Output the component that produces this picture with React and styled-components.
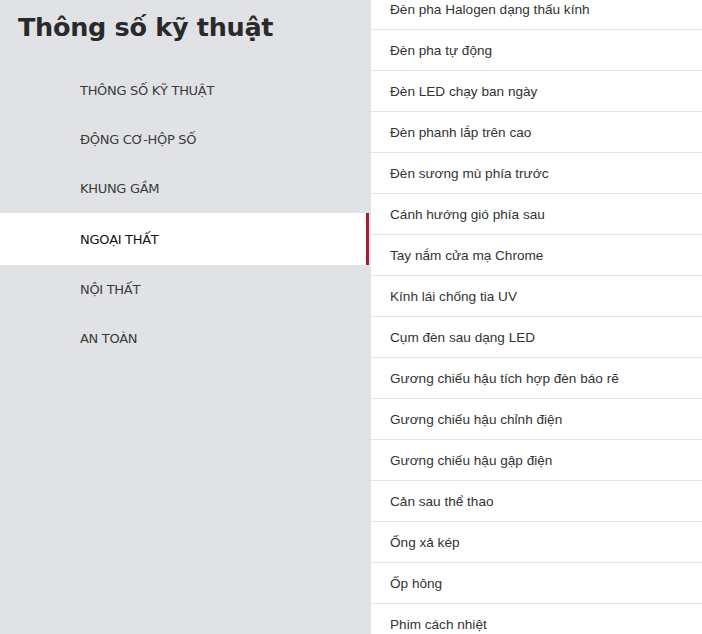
import styled, { createGlobalStyle } from 'styled-components'

const GlobalStyle = createGlobalStyle`
  html, body {
    margin: 0;
    padding: 0;
    background: #e1e2e6;
    overflow: hidden;
  }
`

const sections = [
  'THÔNG SỐ KỸ THUẬT',
  'ĐỘNG CƠ-HỘP SỐ',
  'KHUNG GẦM',
  'NGOẠI THẤT',
  'NỘI THẤT',
  'AN TOÀN',
]

const features = [
  'Đèn pha Halogen dạng thấu kính',
  'Đèn pha tự động',
  'Đèn LED chạy ban ngày',
  'Đèn phanh lắp trên cao',
  'Đèn sương mù phía trước',
  'Cánh hướng gió phía sau',
  'Tay nắm cửa mạ Chrome',
  'Kính lái chống tia UV',
  'Cụm đèn sau dạng LED',
  'Gương chiếu hậu tích hợp đèn báo rẽ',
  'Gương chiếu hậu chỉnh điện',
  'Gương chiếu hậu gập điện',
  'Cản sau thể thao',
  'Ống xả kép',
  'Ốp hông',
  'Phim cách nhiệt',
]

export default function App() {
  const active = 'NGOẠI THẤT'

  return (
    <>
      <GlobalStyle />
      <Page>
        <Sidebar>
          <Title>Thông số kỹ thuật</Title>
          <Nav>
            {sections.map((s) => (
              <NavItem key={s} $active={s === active}>
                {s}
              </NavItem>
            ))}
          </Nav>
        </Sidebar>

        <Content>
          <List>
            {features.map((f) => (
              <Row key={f}>{f}</Row>
            ))}
          </List>
        </Content>
      </Page>
    </>
  )
}

const Page = styled.div`
  display: flex;
  width: 702px;
  height: 634px;
  overflow: hidden;
  background: #e1e2e6;
`

const Sidebar = styled.aside`
  width: 369px;
  flex-shrink: 0;
  margin-right: 2px;
`

const Title = styled.h1`
  margin: 0;
  padding: 12px 0 0 18px;
  height: 61px;
  box-sizing: border-box;
  font-family: 'DejaVu Sans', Verdana, sans-serif;
  font-weight: 700;
  font-size: 25.5px;
  letter-spacing: -0.3px;
  color: #2a2a2a;
`

const Nav = styled.nav`
  display: flex;
  flex-direction: column;
  padding-top: 5px;
`

const NavItem = styled.div`
  display: flex;
  align-items: center;
  height: ${(p) => (p.$active ? '52px' : '49px')};
  padding-left: 80px;
  box-sizing: border-box;
  font-family: 'DejaVu Sans', Verdana, sans-serif;
  font-size: 13px;
  letter-spacing: -0.3px;
  color: ${(p) => (p.$active ? '#111' : '#3a3a3a')};
  background: ${(p) => (p.$active ? '#fff' : 'transparent')};
  border-right: 3px solid ${(p) => (p.$active ? '#a0202f' : 'transparent')};
`

const Content = styled.main`
  flex: 1;
  background: #fff;
  overflow: hidden;
`

const List = styled.ul`
  list-style: none;
  margin: -11px 0 0;
  padding: 0;
`

const Row = styled.li`
  height: 40px;
  display: flex;
  align-items: center;
  padding-left: 19px;
  border-bottom: 1px solid #e3e4e6;
  font-family: 'Liberation Sans', Arial, sans-serif;
  font-size: 13.6px;
  color: #333;
`
